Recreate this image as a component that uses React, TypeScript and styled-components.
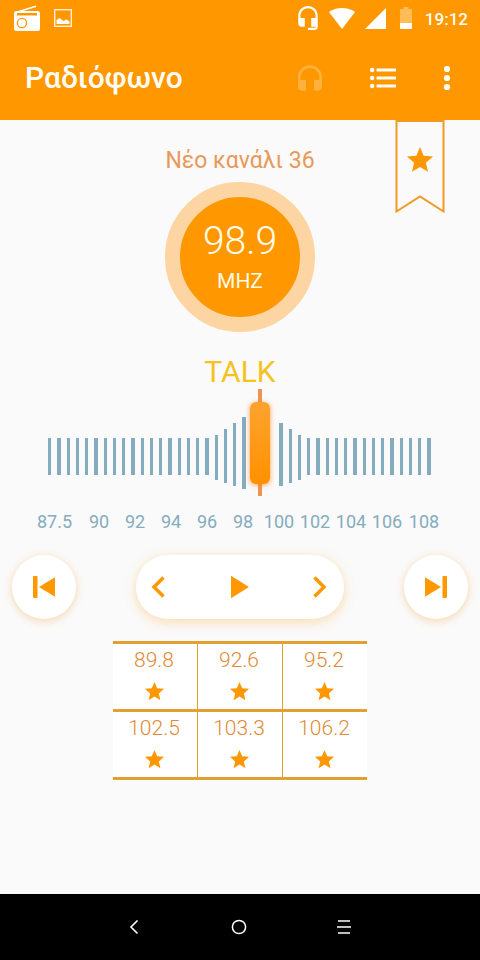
import React, { useState } from 'react';
import styled, { createGlobalStyle } from 'styled-components';

const ORANGE = '#ff9800';

const GlobalStyle = createGlobalStyle`
  * { box-sizing: border-box; }
  body { margin: 0; background: #fafafa; }
  body, button { font-family: Roboto, "Noto Sans", sans-serif; }
  button { border: 0; padding: 0; background: none; cursor: pointer; }
  svg { display: block; }
`;

const Screen = styled.div`
  display: flex;
  flex-direction: column;
  min-height: 100vh;
`;

const Header = styled.header`
  background: ${ORANGE};
  color: #fffdf5;
`;

const StatusBar = styled.div`
  display: flex;
  justify-content: space-between;
  height: 36px;
  padding: 0 12px 0 14px;
`;

const StatusGroup = styled.div<{ $gap: number }>`
  display: flex;
  align-items: center;
  gap: ${(p) => p.$gap}px;
`;

const Clock = styled.time`
  font-size: 17px;
  font-weight: 500;
  line-height: 36px;
  padding-top: 1px;
`;

const Toolbar = styled.div`
  display: flex;
  align-items: center;
  height: 84px;
  padding: 0 24px 0 25px;
`;

const Title = styled.h1`
  flex: 1;
  margin: 0;
  font-size: 30px;
  font-weight: 500;
  line-height: 36px;
`;

const ToolbarActions = styled.div`
  display: flex;
  align-items: center;
  gap: 40px;
`;

const IconButton = styled.button`
  display: grid;
  place-items: center;
  color: inherit;
  &:disabled { opacity: 0.25; }
`;

const Main = styled.main`
  position: relative;
  flex: 1;
  display: flex;
  flex-direction: column;
  align-items: center;
  padding-top: 27px;
  padding-bottom: 24px;
`;

const Ribbon = styled.button`
  position: absolute;
  top: 0;
  right: 35px;
  color: ${ORANGE};
`;

const Station = styled.h2`
  margin: 0 0 7px;
  color: #e8995a;
  font-size: 23px;
  font-weight: 400;
  line-height: 28px;
`;

const Dial = styled.div`
  display: flex;
  flex-direction: column;
  align-items: center;
  width: 150px;
  height: 150px;
  padding-top: 20px;
  border: 15px solid #fdd5a3;
  border-radius: 50%;
  background: ${ORANGE};
  color: #fffbe8;
`;

const Frequency = styled.span`
  font-size: 39px;
  font-weight: 300;
  line-height: 48px;
`;

const Unit = styled.span`
  margin-top: 4px;
  font-size: 21px;
  line-height: 24px;
`;

const Program = styled.p`
  margin: 22px 0 0;
  color: #f5c21f;
  font-size: 30px;
  line-height: 35px;
`;

const Tuner = styled.div`
  position: relative;
  align-self: stretch;
  height: 107px;
  margin: 0 49px 0 48px;
`;

const Bars = styled.div`
  display: flex;
  align-items: flex-start;
  justify-content: space-between;
`;

const Bar = styled.i<{ $wide: boolean; $lift: number; $covered: boolean }>`
  width: ${(p) => (p.$wide ? 4 : 3)}px;
  height: ${(p) => (p.$lift ? 36 + p.$lift * 9 : 37)}px;
  margin-top: ${(p) => (p.$lift ? 52 - p.$lift * 6 : 49)}px;
  visibility: ${(p) => (p.$covered ? 'hidden' : 'visible')};
  background: #85acbe;
`;

const Needle = styled.div`
  position: absolute;
  top: 0;
  bottom: 0;
  width: 20px;
  margin-left: -11px;
  padding: 13px 0 12px;
  background: linear-gradient(#ee9453, #ee9453) center / 4px 100% no-repeat;
`;

const Knob = styled.div`
  height: 100%;
  border-radius: 6px;
  background: linear-gradient(#ffa32e, #ff9100);
  box-shadow: 0 1px 5px rgba(255, 125, 20, 0.75);
`;

const TunerInput = styled.input`
  position: absolute;
  inset: 0;
  width: 100%;
  height: 100%;
  margin: 0;
  opacity: 0;
  cursor: pointer;
`;

const ScaleLabels = styled.div`
  align-self: stretch;
  display: grid;
  grid-template-columns: 53fr repeat(9, 36fr) 38fr;
  margin-top: 15px;
  padding: 0 37px 0 28px;
  color: #85acbe;
  font-size: 18px;
  line-height: 21px;
  text-align: center;
`;

const Controls = styled.div`
  align-self: stretch;
  display: flex;
  justify-content: space-between;
  margin-top: 23px;
  padding: 0 12px;
  color: ${ORANGE};
`;

const RoundButton = styled(IconButton)`
  width: 64px;
  height: 64px;
  border-radius: 50%;
  background: #fff;
  box-shadow: 0 2px 8px rgba(240, 160, 60, 0.4);
`;

const Pill = styled.div`
  display: flex;
  align-items: center;
  justify-content: space-between;
  width: 208px;
  height: 64px;
  padding: 0 14px 0 12px;
  border-radius: 32px;
  background: #fff;
  box-shadow: 0 3px 12px rgba(255, 165, 50, 0.38);
`;

const Presets = styled.div`
  display: grid;
  grid-template-columns: repeat(3, 84px);
  gap: 3px 1px;
  margin-top: 22px;
  border: solid #e3a032;
  border-width: 3px 0;
  background: #e3a032;
`;

const Preset = styled.button`
  display: flex;
  flex-direction: column;
  align-items: center;
  height: 65px;
  padding: 4px 2px 0 0;
  background: #fff;
  color: #e08a35;
  font-size: 21px;
  font-weight: 300;
  line-height: 24px;
  svg { margin-top: 8px; color: ${ORANGE}; }
`;

const NavBar = styled.nav`
  display: flex;
  justify-content: center;
  gap: 81px;
  height: 66px;
  padding-right: 2px;
  background: #000;
  color: #fff;
`;

const NavButton = styled(IconButton)`
  width: 24px;
`;

const Star = ({ size }: { size: number }) => (
  <svg width={size} height={size} viewBox="0 0 24 24" fill="currentColor" aria-hidden>
    <path d="M12 17.27 18.18 21l-1.64-7.03L22 9.24l-7.19-.61L12 2 9.19 8.63 2 9.24l5.46 4.73L5.82 21z" />
  </svg>
);

const RadioIcon = () => (
  <svg width="26" height="26" viewBox="0 0 26 26">
    <path d="M3.5 7 22 1.200" stroke="#fff" strokeWidth="1.6" />
    <rect x="0" y="6" width="26" height="20" rx="2.5" fill="#fff" />
    <path d="M3 8h20v2.500H3z" fill={ORANGE} />
    <circle cx="8" cy="18" r="4.6" fill="none" stroke={ORANGE} strokeWidth="1.3" />
  </svg>
);

const PictureIcon = () => (
  <svg width="18" height="18" viewBox="0 0 18 18">
    <rect x=".7" y=".7" width="16.6" height="16.6" fill="none" stroke="#fff2d8" strokeWidth="1.4" />
    <path d="M2.5 15v-4l3-2 4 3 3-1.5 3 2V15z" fill="#fff" />
  </svg>
);

const HeadsetIcon = () => (
  <svg width="26" height="26" viewBox="0 0 24 24" fill="#fff">
    <path d="M12 1c-4.97 0-9 4.03-9 9v7c0 1.66 1.34 3 3 3h3v-8H5v-2c0-3.87 3.13-7 7-7s7 3.13 7 7v2h-4v8h4v1h-7v2h6c1.66 0 3-1.34 3-3V10c0-4.97-4.03-9-9-9z" />
  </svg>
);

const WifiIcon = () => (
  <svg width="26" height="21" viewBox="0 0 26 21" fill="#fff">
    <path d="M0 4Q5.500 0 13 0T26 4L13 21z" />
  </svg>
);

const SignalIcon = () => (
  <svg width="26" height="21" viewBox="0 0 26 21" fill="#fff">
    <path d="M2 21 23 0v21z" />
  </svg>
);

const BatteryIcon = () => (
  <svg width="20" height="22" viewBox="-3 0 20 22" fill="#fff">
    <path d="M0 3q0-1 1-1h2.500V0h5v2H11q1 0 1 1v13H0z" opacity=".35" />
    <path d="M0 16h12v5q0 1-1 1H1q-1 0-1-1z" />
  </svg>
);

const HeadphonesIcon = () => (
  <svg width="32" height="32" viewBox="0 0 24 24" fill="currentColor">
    <path d="M12 2.500c-4.970 0-9 4.030-9 9v7c0 1.660 1.340 3 3 3h3v-8H5v-2c0-3.870 3.130-7 7-7s7 3.130 7 7v2h-4v8h3c1.660 0 3-1.340 3-3v-7c0-4.970-4.030-9-9-9z" />
  </svg>
);

const ListIcon = () => (
  <svg width="32" height="22" viewBox="-4 0 32 22" fill="currentColor">
    {[3, 11, 19].map((y) => (
      <g key={y}>
        <circle cx="2.2" cy={y} r="2.2" />
        <rect x="6.500" y={y - 1.5} width="19.500" height="3" rx=".5" />
      </g>
    ))}
  </svg>
);

const MoreIcon = () => (
  <svg width="18" height="26" viewBox="0 0 18 26" fill="currentColor">
    <circle cx="9" cy="4" r="3.1" />
    <circle cx="9" cy="13" r="3.1" />
    <circle cx="9" cy="22" r="3.1" />
  </svg>
);

const RibbonIcon = () => (
  <svg width="50" height="94" viewBox="0 0 50 94">
    <path d="M1.500 1h47v90.500L25 76.500 1.500 91.500z" fill="none" stroke="#f09a24" strokeWidth="2" />
    <g transform="translate(9.400 24.500) scale(1.300)">
      <path fill={ORANGE} d="M12 17.27 18.18 21l-1.64-7.03L22 9.24l-7.19-.61L12 2 9.19 8.63 2 9.24l5.46 4.73L5.82 21z" />
    </g>
  </svg>
);

const SkipIcon = ({ forward }: { forward?: boolean }) => (
  <svg width="22" height="22" viewBox="0 0 22 22" fill="currentColor">
    <g transform={forward ? 'matrix(-1 0 0 1 22 0)' : undefined}>
      <rect x="0" y="0" width="4.500" height="22" rx="1" />
      <path d="M6 11 22 1.200v19.600z" />
    </g>
  </svg>
);

const ChevronIcon = ({ forward }: { forward?: boolean }) => (
  <svg width="20" height="24" viewBox="0 0 20 24" fill="none" stroke="currentColor" strokeWidth="3.500">
    <path d={forward ? 'M4.500 2.500 14 12l-9.500 9.500' : 'M15.500 2.500 6 12l9.500 9.500'} />
  </svg>
);

const PlayIcon = () => (
  <svg width="20" height="24" viewBox="0 0 20 24" fill="currentColor">
    <path d="M2 .8 20 12 2 23.200z" />
  </svg>
);

const MIN = 87.5;
const MAX = 108;
const LABELS = ['87.5', '90', '92', '94', '96', '98', '100', '102', '104', '106', '108'];
const PRESETS = ['89.8', '92.6', '95.2', '102.5', '103.3', '106.2'];
const BAR_COUNT = 42;

/* Bars rise towards the knob; the ones next to it are covered. */
const barsFor = (frequency: number) => {
  const knob = Math.round(((frequency - MIN) / (MAX - MIN)) * (BAR_COUNT - 1));
  return Array.from({ length: BAR_COUNT }, (_, i) => {
    const rise = i < knob ? 6 - (knob - i) : 5 - (i - knob);
    return {
      wide: i % 4 === 1,
      lift: Math.min(4, Math.max(0, rise)),
      covered: Math.abs(i - knob) < 2,
    };
  });
};

export default function App() {
  const [frequency, setFrequency] = useState(98.9);
  const step = (delta: number) =>
    setFrequency((f) => Math.min(MAX, Math.max(MIN, Math.round((f + delta) * 10) / 10)));

  return (
    <Screen>
      <GlobalStyle />
      <Header>
        <StatusBar>
          <StatusGroup $gap={14}>
            <RadioIcon />
            <PictureIcon />
          </StatusGroup>
          <StatusGroup $gap={8}>
            <HeadsetIcon />
            <WifiIcon />
            <SignalIcon />
            <BatteryIcon />
            <Clock>19:12</Clock>
          </StatusGroup>
        </StatusBar>
        <Toolbar>
          <Title>Ραδιόφωνο</Title>
          <ToolbarActions>
            <IconButton type="button" disabled aria-label="Ακουστικά"><HeadphonesIcon /></IconButton>
            <IconButton type="button" aria-label="Λίστα σταθμών"><ListIcon /></IconButton>
            <IconButton type="button" aria-label="Περισσότερα"><MoreIcon /></IconButton>
          </ToolbarActions>
        </Toolbar>
      </Header>

      <Main>
        <Ribbon type="button" aria-label="Αγαπημένο"><RibbonIcon /></Ribbon>
        <Station>Νέο κανάλι 36</Station>
        <Dial>
          <Frequency>{frequency.toFixed(1)}</Frequency>
          <Unit>MHZ</Unit>
        </Dial>
        <Program>TALK</Program>

        <Tuner>
          <Bars>
            {barsFor(frequency).map((bar, i) => (
              <Bar key={i} $wide={bar.wide} $lift={bar.lift} $covered={bar.covered} />
            ))}
          </Bars>
          <Needle style={{ left: `${((frequency - MIN) / (MAX - MIN)) * 100}%` }}>
            <Knob />
          </Needle>
          <TunerInput
            type="range"
            aria-label="Συχνότητα"
            min={MIN}
            max={MAX}
            step={0.1}
            value={frequency}
            onChange={(e) => setFrequency(Number(e.target.value))}
          />
        </Tuner>
        <ScaleLabels>
          {LABELS.map((label) => <span key={label}>{label}</span>)}
        </ScaleLabels>

        <Controls>
          <RoundButton type="button" aria-label="Προηγούμενος σταθμός"><SkipIcon /></RoundButton>
          <Pill>
            <IconButton type="button" aria-label="Μείωση συχνότητας" onClick={() => step(-0.1)}><ChevronIcon /></IconButton>
            <IconButton type="button" aria-label="Αναπαραγωγή"><PlayIcon /></IconButton>
            <IconButton type="button" aria-label="Αύξηση συχνότητας" onClick={() => step(0.1)}><ChevronIcon forward /></IconButton>
          </Pill>
          <RoundButton type="button" aria-label="Επόμενος σταθμός"><SkipIcon forward /></RoundButton>
        </Controls>

        <Presets>
          {PRESETS.map((preset) => (
            <Preset key={preset} type="button" onClick={() => setFrequency(Number(preset))}>
              {preset}
              <Star size={23} />
            </Preset>
          ))}
        </Presets>
      </Main>

      <NavBar>
        <NavButton type="button" aria-label="Πίσω">
          <svg width="10" height="16" viewBox="0 0 10 16" fill="none" stroke="currentColor" strokeWidth="1.600">
            <path d="M8.500 1.500 2 8l6.500 6.500" />
          </svg>
        </NavButton>
        <NavButton type="button" aria-label="Αρχική">
          <svg width="16" height="16" viewBox="0 0 16 16" fill="none" stroke="currentColor" strokeWidth="1.500">
            <circle cx="8" cy="8" r="6.600" />
          </svg>
        </NavButton>
        <NavButton type="button" aria-label="Πρόσφατα">
          <svg width="16" height="16" viewBox="0 0 16 16" stroke="currentColor" strokeWidth="1.600">
            <path d="M2 2h12M1 8h14M2 14h12" />
          </svg>
        </NavButton>
      </NavBar>
    </Screen>
  );
}
